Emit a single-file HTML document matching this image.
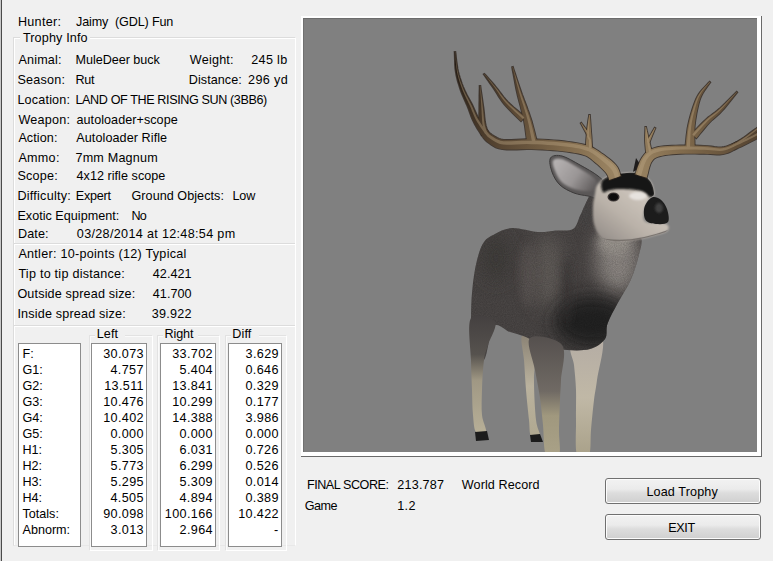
<!DOCTYPE html>
<html><head><meta charset="utf-8"><style>
html,body{margin:0;padding:0;}
body{width:773px;height:561px;overflow:hidden;background:#f0f0f0;position:relative;font-family:"Liberation Sans", sans-serif;color:#000;}
.t{position:absolute;white-space:nowrap;}
.a{position:absolute;box-sizing:border-box;}
.box{position:absolute;box-sizing:border-box;background:#fff;border:1px solid #8c8c8c;}
.btn{position:absolute;box-sizing:border-box;border:1px solid #707070;border-radius:3px;
 background:linear-gradient(#f2f2f2 0%,#ebebeb 42%,#dddddd 58%,#cfcfcf 100%);box-shadow:inset 0 0 0 1px #fcfcfc;}
</style></head><body>
<div class="a" style="left:0;top:0;width:1px;height:561px;background:#c8c8c8"></div>
<div class="a" style="left:1px;top:0;width:1px;height:561px;background:#4a4a4a"></div>
<div class="a" style="left:13px;top:37px;width:283px;height:509px;border:1px solid #dcdcdc;border-right-color:#fff;border-bottom-color:#e8e8e8;box-shadow:inset 1px 1px 0 #fff;"></div>
<div class="a" style="left:20px;top:32px;width:70px;height:10px;background:#f0f0f0"></div>
<div class="a" style="left:14px;top:243px;width:281px;height:1px;background:#dcdcdc"></div>
<div class="a" style="left:14px;top:244px;width:281px;height:1px;background:#fff"></div>
<div class="a" style="left:14px;top:325px;width:281px;height:1px;background:#dcdcdc"></div>
<div class="a" style="left:14px;top:326px;width:281px;height:1px;background:#fff"></div>
<div class="a" style="left:89px;top:335px;width:64px;height:216px;border:1px solid #e2e2e2;border-right-color:#fff;border-bottom-color:#fff;box-shadow:inset 1px 1px 0 #fafafa;"></div>
<div class="a" style="left:157px;top:335px;width:63px;height:216px;border:1px solid #e2e2e2;border-right-color:#fff;border-bottom-color:#fff;box-shadow:inset 1px 1px 0 #fafafa;"></div>
<div class="a" style="left:225px;top:335px;width:62px;height:216px;border:1px solid #e2e2e2;border-right-color:#fff;border-bottom-color:#fff;box-shadow:inset 1px 1px 0 #fafafa;"></div>
<div class="a" style="left:95px;top:330px;width:30px;height:10px;background:#f0f0f0"></div>
<div class="a" style="left:163px;top:330px;width:35px;height:10px;background:#f0f0f0"></div>
<div class="a" style="left:231px;top:330px;width:28px;height:10px;background:#f0f0f0"></div>
<div class="box" style="left:18px;top:343px;width:63px;height:204px"></div>
<div class="box" style="left:91px;top:343px;width:56px;height:204px"></div>
<div class="box" style="left:160px;top:343px;width:56px;height:204px"></div>
<div class="box" style="left:228px;top:343px;width:54px;height:204px"></div>
<div class="a" style="left:301px;top:16px;width:461px;height:441px;background:#fff;border-right:1px solid #6a6a6a;border-bottom:1px solid #6a6a6a;"></div>
<div class="a" style="left:303px;top:18px;width:454px;height:434px;background:#808080;border-top:1px solid #6c6c6c;border-left:1px solid #707070;"></div>
<svg class="a" style="left:0;top:0" width="773" height="561" viewBox="0 0 773 561">
<defs>
<clipPath id="vp"><rect x="303" y="19" width="454" height="433"/></clipPath>
<radialGradient id="ant" gradientUnits="userSpaceOnUse" cx="625" cy="165" r="200"><stop offset="0" stop-color="#a08a68"/><stop offset="0.3" stop-color="#806a4c"/><stop offset="0.62" stop-color="#5a4834"/><stop offset="1" stop-color="#221a14"/></radialGradient>
<linearGradient id="lg1" x1="0" y1="0" x2="0" y2="1"><stop offset="0" stop-color="#444040"/><stop offset="0.33" stop-color="#56524e"/><stop offset="0.55" stop-color="#a09884"/><stop offset="1" stop-color="#b8b098"/></linearGradient>
<linearGradient id="lg2" x1="0" y1="0" x2="0" y2="1"><stop offset="0" stop-color="#8a8274"/><stop offset="0.5" stop-color="#bab29e"/><stop offset="1" stop-color="#b0a890"/></linearGradient>
<linearGradient id="lg3" x1="0" y1="0" x2="0" y2="1"><stop offset="0" stop-color="#55504e"/><stop offset="0.45" stop-color="#706a64"/><stop offset="0.65" stop-color="#a0987e"/><stop offset="1" stop-color="#aaa288"/></linearGradient>
<linearGradient id="lg4" x1="0" y1="0" x2="0" y2="1"><stop offset="0" stop-color="#b4aca4"/><stop offset="0.5" stop-color="#c0b8a6"/><stop offset="1" stop-color="#a8a088"/></linearGradient>
<linearGradient id="faceg" gradientUnits="userSpaceOnUse" x1="640" y1="188" x2="600" y2="240"><stop offset="0" stop-color="#d0c8bf"/><stop offset="0.5" stop-color="#bab2a9"/><stop offset="0.85" stop-color="#a09993"/><stop offset="1" stop-color="#918b86"/></linearGradient>
<filter id="bl" x="-150%" y="-150%" width="400%" height="400%"><feGaussianBlur stdDeviation="9"/></filter>
<linearGradient id="earg" gradientUnits="userSpaceOnUse" x1="556" y1="162" x2="596" y2="190"><stop offset="0" stop-color="#b4b0b0"/><stop offset="0.5" stop-color="#9a9696"/><stop offset="1" stop-color="#5a5656"/></linearGradient>
<filter id="bl3" x="-20%" y="-20%" width="140%" height="140%"><feGaussianBlur stdDeviation="0.6"/></filter>
<filter id="noise" x="0" y="0" width="100%" height="100%"><feTurbulence type="fractalNoise" baseFrequency="0.9" numOctaves="2" seed="3"/><feColorMatrix type="matrix" values="0 0 0 0 0  0 0 0 0 0  0 0 0 0 0  0 0 0 -1.4 1.1"/></filter>
<filter id="bl4" x="-300%" y="-50%" width="700%" height="200%"><feGaussianBlur stdDeviation="4"/></filter>
<filter id="bl5" x="-20%" y="-20%" width="140%" height="140%"><feGaussianBlur stdDeviation="1.3"/></filter>
<filter id="bl2" x="-50%" y="-50%" width="200%" height="200%"><feGaussianBlur stdDeviation="1.2"/></filter>
<clipPath id="bodyc"><path d="M604.0,182.0 C602.7,178.2 595.2,188.2 592.0,192.0 C588.8,195.8 587.0,201.0 585.0,205.0 C583.0,209.0 582.0,212.0 580.0,216.0 C578.0,220.0 577.0,226.6 573.0,229.0 C569.0,231.4 561.8,230.0 556.0,230.5 C550.2,231.0 545.3,232.4 538.0,232.0 C530.7,231.6 519.2,227.7 512.0,228.0 C504.8,228.3 499.8,231.4 495.0,234.0 C490.2,236.6 486.2,238.1 483.0,243.5 C479.8,248.9 477.4,257.6 475.5,266.7 C473.6,275.8 472.4,287.2 471.6,297.8 C470.9,308.4 471.0,321.3 471.0,330.0 C471.0,338.7 469.4,345.0 471.6,350.0 C473.8,355.0 480.3,363.9 484.0,360.0 C487.7,356.1 489.3,331.0 493.6,326.3 C497.9,321.6 504.8,330.3 510.0,332.0 C515.2,333.7 518.9,334.3 524.7,336.6 C530.5,338.9 538.0,343.8 545.0,346.0 C552.0,348.2 559.5,349.5 567.0,350.0 C574.5,350.5 583.7,350.8 590.0,349.0 C596.3,347.2 602.1,343.2 605.0,339.0 C607.9,334.8 605.4,329.7 607.5,323.7 C609.6,317.7 613.9,310.3 617.8,303.0 C621.7,295.7 627.3,287.5 630.8,279.7 C634.2,271.9 636.8,263.3 638.5,256.4 C640.2,249.5 642.9,241.9 641.0,238.3 C639.1,234.7 631.8,235.6 627.0,235.0 C622.2,234.4 616.5,238.3 612.0,235.0 C607.5,231.7 601.3,223.8 600.0,215.0 C598.7,206.2 605.3,185.8 604.0,182.0Z"/></clipPath>
<clipPath id="facec"><path d="M598.0,184.0 C600.8,180.8 605.3,176.8 612.0,175.0 C618.7,173.2 631.7,172.0 638.0,173.0 C644.3,174.0 647.3,177.5 650.0,181.0 C652.7,184.5 654.2,191.0 654.0,194.0 C653.8,197.0 650.7,196.0 649.0,199.0 C647.3,202.0 644.5,208.2 644.0,212.0 C643.5,215.8 642.3,220.0 646.0,222.0 C649.7,224.0 662.5,222.5 666.0,224.0 C669.5,225.5 669.3,229.0 667.0,231.0 C664.7,233.0 657.5,234.5 652.0,236.0 C646.5,237.5 640.3,239.2 634.0,240.0 C627.7,240.8 619.5,241.5 614.0,241.0 C608.5,240.5 604.3,239.8 601.0,237.0 C597.7,234.2 595.3,229.2 594.0,224.0 C592.7,218.8 592.8,211.0 593.0,206.0 C593.2,201.0 594.2,197.7 595.0,194.0 C595.8,190.3 595.2,187.2 598.0,184.0Z"/></clipPath>
</defs>
<g clip-path="url(#vp)">
<path d="M522.0,336.0 C524.0,332.7 534.0,332.7 536.0,340.0 C538.0,347.3 534.0,366.7 534.0,380.0 C534.0,393.3 535.0,410.7 536.0,420.0 C537.0,429.3 540.8,433.3 540.0,436.0 C539.2,438.7 532.8,438.7 531.0,436.0 C529.2,433.3 529.8,427.7 529.0,420.0 C528.2,412.3 526.8,400.0 526.0,390.0 C525.2,380.0 524.7,369.0 524.0,360.0 C523.3,351.0 520.0,339.3 522.0,336.0Z" fill="url(#lg2)"/>
<path d="M572.0,345.0 C576.7,340.5 597.8,332.2 602.0,338.0 C606.2,343.8 598.3,369.7 597.0,380.0 C595.7,390.3 595.0,391.7 594.0,400.0 C593.0,408.3 591.8,420.8 591.0,430.0 C590.2,439.2 591.3,450.8 589.0,455.0 C586.7,459.2 579.2,460.8 577.0,455.0 C574.8,449.2 576.2,430.8 576.0,420.0 C575.8,409.2 576.3,399.2 576.0,390.0 C575.7,380.8 574.7,372.5 574.0,365.0 C573.3,357.5 567.3,349.5 572.0,345.0Z" fill="url(#lg4)"/>
<path d="M604.0,182.0 C602.7,178.2 595.2,188.2 592.0,192.0 C588.8,195.8 587.0,201.0 585.0,205.0 C583.0,209.0 582.0,212.0 580.0,216.0 C578.0,220.0 577.0,226.6 573.0,229.0 C569.0,231.4 561.8,230.0 556.0,230.5 C550.2,231.0 545.3,232.4 538.0,232.0 C530.7,231.6 519.2,227.7 512.0,228.0 C504.8,228.3 499.8,231.4 495.0,234.0 C490.2,236.6 486.2,238.1 483.0,243.5 C479.8,248.9 477.4,257.6 475.5,266.7 C473.6,275.8 472.4,287.2 471.6,297.8 C470.9,308.4 471.0,321.3 471.0,330.0 C471.0,338.7 469.4,345.0 471.6,350.0 C473.8,355.0 480.3,363.9 484.0,360.0 C487.7,356.1 489.3,331.0 493.6,326.3 C497.9,321.6 504.8,330.3 510.0,332.0 C515.2,333.7 518.9,334.3 524.7,336.6 C530.5,338.9 538.0,343.8 545.0,346.0 C552.0,348.2 559.5,349.5 567.0,350.0 C574.5,350.5 583.7,350.8 590.0,349.0 C596.3,347.2 602.1,343.2 605.0,339.0 C607.9,334.8 605.4,329.7 607.5,323.7 C609.6,317.7 613.9,310.3 617.8,303.0 C621.7,295.7 627.3,287.5 630.8,279.7 C634.2,271.9 636.8,263.3 638.5,256.4 C640.2,249.5 642.9,241.9 641.0,238.3 C639.1,234.7 631.8,235.6 627.0,235.0 C622.2,234.4 616.5,238.3 612.0,235.0 C607.5,231.7 601.3,223.8 600.0,215.0 C598.7,206.2 605.3,185.8 604.0,182.0Z" fill="#4a4645"/>
<g clip-path="url(#bodyc)">
<ellipse cx="618" cy="258" rx="22" ry="36" fill="#8c8682" filter="url(#bl)"/>
<ellipse cx="614" cy="242" rx="16" ry="12" fill="#9a948e" filter="url(#bl4)"/>
<ellipse cx="586" cy="212" rx="6" ry="16" fill="#4a4646" filter="url(#bl4)"/>
<ellipse cx="548" cy="272" rx="16" ry="38" fill="#605b58" filter="url(#bl)"/>
<ellipse cx="592" cy="322" rx="38" ry="26" fill="#242020" filter="url(#bl)"/>
<ellipse cx="496" cy="258" rx="14" ry="24" fill="#403c3b" filter="url(#bl)"/>
<ellipse cx="567" cy="290" rx="4" ry="34" fill="#363232" filter="url(#bl4)" opacity="0.8"/>
<ellipse cx="528" cy="275" rx="8" ry="32" fill="#5e5956" filter="url(#bl4)" opacity="0.7"/>
<rect x="460" y="180" width="200" height="190" fill="#000" filter="url(#noise)" opacity="0.18"/>
</g>
<path d="M471.0,318.0 C475.0,311.7 492.2,317.5 495.0,322.0 C497.8,326.5 489.8,338.7 488.0,345.0 C486.2,351.3 485.0,352.5 484.0,360.0 C483.0,367.5 482.3,380.8 482.0,390.0 C481.7,399.2 481.3,408.0 482.0,415.0 C482.7,422.0 487.0,429.2 486.0,432.0 C485.0,434.8 478.2,434.8 476.0,432.0 C473.8,429.2 473.7,422.0 473.0,415.0 C472.3,408.0 472.3,399.2 472.0,390.0 C471.7,380.8 471.2,372.0 471.0,360.0 C470.8,348.0 467.0,324.3 471.0,318.0Z" fill="url(#lg1)"/>
<path d="M530.0,338.0 C534.5,333.8 556.8,338.0 562.0,345.0 C567.2,352.0 561.3,370.8 561.0,380.0 C560.7,389.2 560.3,391.7 560.0,400.0 C559.7,408.3 559.2,420.8 559.0,430.0 C558.8,439.2 561.2,450.8 559.0,455.0 C556.8,459.2 548.7,460.0 546.0,455.0 C543.3,450.0 544.0,434.5 543.0,425.0 C542.0,415.5 541.3,407.2 540.0,398.0 C538.7,388.8 536.7,380.0 535.0,370.0 C533.3,360.0 525.5,342.2 530.0,338.0Z" fill="url(#lg3)"/>
<path d="M475,432 L487,431 L489,440 L476,441Z" fill="#1c1c1c"/>
<path d="M530,435 L540,434 L543,442 L531,442Z" fill="#1c1c1c"/>
<path d="M633,172 L636,158 L642,167Z" fill="#1e1c1c"/>
<path d="M550.5,158.0 C552.2,155.3 557.1,154.8 562.0,156.0 C566.9,157.2 574.0,161.7 580.0,165.0 C586.0,168.3 593.7,172.5 598.0,176.0 C602.3,179.5 605.7,182.3 606.0,186.0 C606.3,189.7 603.0,196.3 600.0,198.0 C597.0,199.7 592.3,196.8 588.0,196.0 C583.7,195.2 578.7,194.8 574.0,193.0 C569.3,191.2 563.7,188.5 560.0,185.0 C556.3,181.5 553.6,176.5 552.0,172.0 C550.4,167.5 548.8,160.7 550.5,158.0Z" fill="#5a5757" stroke="#3c3a3a" stroke-width="1"/>
<path d="M553.0,160.5 C554.2,158.5 557.8,157.8 562.0,159.0 C566.2,160.2 572.7,164.3 578.0,167.5 C583.3,170.7 590.7,174.6 594.0,178.0 C597.3,181.4 599.0,185.8 598.0,188.0 C597.0,190.2 592.0,190.8 588.0,191.0 C584.0,191.2 578.3,190.4 574.0,189.0 C569.7,187.6 565.2,185.5 562.0,182.5 C558.8,179.5 556.5,174.7 555.0,171.0 C553.5,167.3 551.8,162.5 553.0,160.5Z" fill="url(#earg)" filter="url(#bl2)"/>
<path d="M598.0,184.0 C600.8,180.8 605.3,176.8 612.0,175.0 C618.7,173.2 631.7,172.0 638.0,173.0 C644.3,174.0 647.3,177.5 650.0,181.0 C652.7,184.5 654.2,191.0 654.0,194.0 C653.8,197.0 650.7,196.0 649.0,199.0 C647.3,202.0 644.5,208.2 644.0,212.0 C643.5,215.8 642.3,220.0 646.0,222.0 C649.7,224.0 662.5,222.5 666.0,224.0 C669.5,225.5 669.3,229.0 667.0,231.0 C664.7,233.0 657.5,234.5 652.0,236.0 C646.5,237.5 640.3,239.2 634.0,240.0 C627.7,240.8 619.5,241.5 614.0,241.0 C608.5,240.5 604.3,239.8 601.0,237.0 C597.7,234.2 595.3,229.2 594.0,224.0 C592.7,218.8 592.8,211.0 593.0,206.0 C593.2,201.0 594.2,197.7 595.0,194.0 C595.8,190.3 595.2,187.2 598.0,184.0Z" fill="url(#faceg)" filter="url(#bl5)"/>
<g clip-path="url(#facec)">
<path d="M602.0,181.0 C603.8,178.0 610.2,175.6 614.0,174.0 C617.8,172.4 620.7,171.7 625.0,171.5 C629.3,171.3 635.7,171.4 640.0,173.0 C644.3,174.6 648.5,177.5 651.0,181.0 C653.5,184.5 655.2,191.3 655.0,194.0 C654.8,196.7 652.3,197.5 650.0,197.0 C647.7,196.5 645.7,192.3 641.0,191.0 C636.3,189.7 627.2,189.2 622.0,189.0 C616.8,188.8 613.2,189.5 610.0,190.0 C606.8,190.5 604.3,193.5 603.0,192.0 C601.7,190.5 600.2,184.0 602.0,181.0Z" fill="#151515" filter="url(#bl2)"/>
<ellipse cx="638" cy="196" rx="9" ry="4" fill="#e6e2de" filter="url(#bl2)"/>
<path d="M594,236 Q625,246 668,230 L668,245 L590,245Z" fill="#6e6864" filter="url(#bl3)" opacity="0.8"/>
</g>
<path d="M652.0,197.4 C654.7,196.2 658.0,197.7 660.5,199.6 C663.0,201.5 665.8,205.3 667.0,209.0 C668.2,212.7 669.8,219.5 668.0,222.0 C666.2,224.5 659.7,224.3 656.0,224.0 C652.3,223.7 647.5,222.8 645.6,220.0 C643.7,217.2 643.4,210.8 644.5,207.0 C645.6,203.2 649.3,198.6 652.0,197.4Z" fill="#1c1c1c"/>
<ellipse cx="659" cy="208" rx="4" ry="5" fill="#404040" filter="url(#bl2)"/>
<ellipse cx="613.5" cy="197" rx="6" ry="4.6" fill="#3a3634" filter="url(#bl3)"/><ellipse cx="613.5" cy="197" rx="4.6" ry="3.6" fill="#0c0c0c"/>
<g fill="none" stroke="#30261e" stroke-width="1.8" stroke-opacity="0.8"><path d="M620.7,176.0 L620.4,175.2 L620.1,174.0 L619.6,172.2 L618.8,169.9 L617.6,167.5 L615.8,165.1 L613.8,162.9 L611.4,160.8 L608.9,158.7 L606.2,156.7 L603.7,154.8 L601.3,153.2 L599.4,151.8 L597.5,150.5 L595.5,149.2 L593.2,147.9 L590.6,146.7 L587.6,145.6 L584.1,144.7 L580.5,143.8 L576.5,143.1 L572.4,142.4 L568.1,141.8 L563.6,141.2 L558.7,140.7 L553.6,140.3 L548.2,139.9 L542.7,139.6 L537.3,139.4 L532.1,139.2 L526.8,139.2 L521.4,139.4 L516.1,139.7 L511.3,139.9 L507.0,140.0 L503.6,139.8 L501.0,139.4 L499.1,138.8 L497.6,138.2 L496.2,137.4 L494.7,136.5 L493.1,135.5 L491.8,134.7 L491.0,134.1 L490.3,133.6 L489.5,132.9 L488.6,131.9 L487.5,130.5 L486.1,128.9 L484.6,127.0 L483.0,125.0 L481.5,122.9 L480.0,120.7 L478.6,118.6 L477.5,116.5 L476.5,114.4 L475.5,112.2 L474.5,109.9 L473.5,107.5 L472.3,105.0 L471.0,102.4 L469.6,99.9 L468.1,97.3 L466.7,94.7 L465.4,92.0 L464.2,89.3 L463.0,86.6 L461.9,83.7 L460.9,80.8 L459.9,77.8 L459.0,74.8 L458.2,71.8 L457.5,68.4 L457.0,64.6 L456.4,60.8 L456.0,57.2 L455.7,54.2 L455.4,52.0 L454.6,52.0 L454.7,54.2 L454.8,57.3 L454.9,60.9 L455.0,64.8 L455.3,68.7 L455.8,72.2 L456.4,75.5 L457.1,78.6 L457.9,81.7 L458.9,84.7 L459.8,87.7 L460.8,90.7 L461.9,93.6 L463.1,96.4 L464.3,99.2 L465.5,101.9 L466.7,104.5 L467.7,107.0 L468.7,109.5 L469.5,111.8 L470.4,114.2 L471.3,116.6 L472.2,119.0 L473.4,121.4 L474.6,123.9 L476.0,126.3 L477.4,128.8 L478.9,131.1 L480.3,133.2 L481.5,135.1 L482.6,136.6 L483.5,137.9 L484.5,139.1 L485.6,140.3 L486.9,141.5 L488.3,142.5 L489.7,143.6 L491.3,144.8 L493.3,146.1 L495.7,147.4 L498.8,148.5 L502.4,149.2 L506.7,149.6 L511.5,149.6 L516.5,149.5 L521.7,149.3 L526.9,149.2 L531.9,149.2 L536.9,149.4 L542.2,149.6 L547.6,149.9 L552.8,150.3 L557.8,150.7 L562.4,151.2 L566.8,151.7 L570.9,152.3 L574.8,152.9 L578.4,153.6 L581.6,154.3 L584.4,155.2 L586.7,156.0 L588.3,156.9 L589.8,157.9 L591.2,159.0 L592.8,160.4 L594.7,162.0 L596.8,163.7 L598.9,165.6 L601.1,167.7 L603.2,169.7 L604.9,171.5 L606.2,172.9 L606.9,174.0 L607.5,175.1 L608.0,176.3 L608.5,177.5 L608.9,178.9 L609.3,180.0Z"/><path d="M536.9,141.0 L536.3,138.8 L535.5,135.7 L534.6,132.0 L533.6,128.1 L532.6,124.4 L531.7,121.1 L530.8,118.4 L530.0,116.0 L529.3,113.8 L528.5,111.6 L527.7,109.5 L526.9,107.1 L526.0,104.7 L525.1,102.3 L524.1,99.9 L523.2,97.3 L522.1,94.6 L521.0,91.4 L519.7,87.6 L518.2,83.0 L516.6,78.2 L515.1,73.6 L513.8,69.7 L512.9,66.9 L512.1,67.1 L512.6,70.0 L513.4,74.0 L514.3,78.8 L515.2,83.8 L516.1,88.5 L517.0,92.6 L517.7,95.9 L518.5,98.8 L519.2,101.5 L519.9,104.0 L520.5,106.4 L521.1,108.9 L521.7,111.3 L522.3,113.5 L522.8,115.7 L523.4,117.9 L523.9,120.2 L524.3,122.9 L524.9,126.0 L525.4,129.8 L525.9,133.7 L526.4,137.5 L526.8,140.7 L527.1,143.0Z"/><path d="M525.0,116.8 L523.0,115.1 L520.2,112.8 L516.9,110.0 L513.5,107.1 L510.3,104.2 L507.6,101.6 L505.4,99.2 L503.4,96.8 L501.6,94.4 L499.8,92.0 L498.0,89.5 L496.1,87.2 L494.0,84.7 L491.8,82.1 L489.5,79.5 L487.4,77.2 L485.6,75.2 L484.3,73.8 L483.7,74.2 L484.8,75.8 L486.3,78.0 L488.1,80.6 L490.1,83.4 L492.1,86.2 L493.9,88.8 L495.5,91.3 L497.1,93.8 L498.7,96.4 L500.4,99.0 L502.3,101.7 L504.4,104.4 L507.1,107.4 L510.2,110.6 L513.4,113.9 L516.5,116.9 L519.1,119.4 L521.0,121.2Z"/><path d="M488.4,133.0 L488.0,132.0 L487.5,130.6 L486.9,129.1 L486.4,127.4 L485.8,125.5 L485.4,123.6 L485.0,121.5 L484.7,119.2 L484.4,116.6 L484.2,113.9 L483.9,111.0 L483.5,107.9 L483.0,104.3 L482.4,100.2 L481.8,95.9 L481.2,91.9 L480.7,88.4 L480.4,86.0 L479.6,86.0 L479.6,88.5 L479.5,92.0 L479.4,96.1 L479.4,100.4 L479.3,104.5 L479.3,108.1 L479.3,111.2 L479.2,114.1 L479.2,116.9 L479.2,119.5 L479.3,122.0 L479.4,124.4 L479.7,126.8 L480.1,128.9 L480.6,130.9 L481.0,132.6 L481.4,134.0 L481.6,135.0Z"/><path d="M592.2,148.0 L592.1,146.0 L591.9,143.2 L591.7,139.9 L591.5,136.4 L591.2,133.0 L591.0,130.0 L590.8,127.2 L590.6,124.3 L590.4,121.4 L590.2,118.8 L590.0,116.6 L589.9,115.0 L589.1,115.0 L588.9,116.6 L588.5,118.7 L588.1,121.3 L587.7,124.2 L587.3,127.1 L587.0,130.0 L586.7,133.0 L586.5,136.4 L586.2,139.9 L586.0,143.2 L585.9,146.0 L585.8,148.0Z"/><path d="M589.1,133.3 L588.2,132.0 L586.8,130.2 L585.2,128.1 L583.6,125.9 L582.2,124.1 L581.3,122.8 L580.7,123.2 L581.5,124.5 L582.6,126.6 L583.8,128.9 L585.1,131.3 L586.2,133.3 L586.9,134.7Z"/><path d="M646.7,177.8 L647.2,175.8 L647.9,173.2 L648.6,170.1 L649.4,167.1 L650.3,164.5 L651.1,162.6 L652.0,161.2 L652.8,160.1 L653.5,159.2 L654.4,158.5 L655.7,157.8 L657.4,157.0 L659.6,156.3 L662.3,155.7 L665.3,155.1 L668.7,154.7 L672.4,154.3 L676.2,154.0 L680.4,153.8 L685.1,153.7 L690.1,153.7 L695.0,153.7 L699.7,153.8 L703.9,153.8 L707.4,153.9 L710.6,154.1 L713.7,154.3 L716.8,154.5 L719.8,154.5 L723.0,154.2 L726.0,153.5 L728.7,152.6 L731.2,151.5 L733.5,150.3 L735.9,149.1 L738.5,147.8 L741.6,146.4 L745.0,144.8 L748.5,143.0 L751.8,141.3 L754.8,139.7 L757.3,138.4 L759.2,137.3 L760.6,136.4 L761.7,135.5 L762.5,134.9 L763.1,134.4 L763.5,134.0 L760.5,130.0 L759.9,130.4 L759.3,130.8 L758.6,131.3 L757.7,131.9 L756.4,132.7 L754.7,133.6 L752.3,134.8 L749.3,136.3 L745.9,137.9 L742.5,139.5 L739.1,141.1 L736.1,142.4 L733.4,143.5 L730.9,144.6 L728.6,145.5 L726.5,146.3 L724.3,146.9 L722.0,147.2 L719.6,147.3 L717.2,147.2 L714.4,146.9 L711.4,146.4 L707.9,146.1 L704.1,145.8 L699.9,145.7 L695.1,145.5 L690.1,145.5 L685.1,145.4 L680.2,145.4 L675.8,145.6 L671.8,145.7 L667.9,145.9 L664.2,146.2 L660.7,146.6 L657.4,147.2 L654.4,148.0 L651.7,149.0 L649.3,150.1 L647.2,151.6 L645.3,153.3 L643.7,155.2 L642.1,157.4 L640.5,160.2 L639.1,163.5 L637.8,166.8 L636.7,169.9 L635.9,172.5 L635.3,174.2Z"/><path d="M694.7,149.2 L694.7,146.9 L694.6,143.7 L694.5,140.1 L694.4,136.1 L694.4,132.3 L694.5,128.9 L694.7,125.8 L695.1,122.6 L695.5,119.5 L696.0,116.5 L696.5,113.5 L697.1,110.6 L697.7,107.9 L698.3,105.3 L698.9,102.8 L699.6,100.4 L700.4,98.1 L701.4,95.8 L702.7,93.4 L704.3,90.8 L706.1,88.2 L707.8,85.8 L709.3,83.7 L710.3,82.3 L709.7,81.7 L708.4,83.0 L706.7,84.8 L704.6,87.0 L702.4,89.3 L700.3,91.8 L698.6,94.2 L697.2,96.6 L696.0,99.0 L695.0,101.5 L694.1,104.0 L693.2,106.6 L692.3,109.4 L691.4,112.2 L690.5,115.2 L689.7,118.3 L688.9,121.5 L688.2,124.8 L687.5,128.1 L687.0,131.8 L686.5,135.7 L686.1,139.8 L685.7,143.5 L685.5,146.6 L685.3,148.8Z"/><path d="M696.4,138.2 L697.9,136.4 L699.8,134.0 L702.2,131.1 L704.7,128.1 L707.1,125.2 L709.4,122.7 L711.4,120.7 L713.3,119.0 L715.3,117.3 L717.3,115.6 L719.5,113.6 L721.8,111.2 L724.4,108.3 L727.4,104.7 L730.4,101.0 L733.2,97.4 L735.6,94.4 L737.3,92.3 L736.7,91.7 L734.8,93.7 L732.0,96.4 L728.8,99.6 L725.5,103.0 L722.2,106.1 L719.4,108.8 L717.0,110.8 L714.8,112.5 L712.7,114.0 L710.6,115.6 L708.3,117.3 L706.0,119.3 L703.5,121.7 L700.7,124.4 L697.9,127.3 L695.3,130.0 L693.1,132.2 L691.6,133.8Z"/><path d="M652.0,151.5 L651.6,150.2 L651.2,148.4 L650.6,146.4 L650.1,144.1 L649.5,141.9 L649.0,139.7 L648.5,137.5 L647.9,135.1 L647.4,132.6 L646.8,130.3 L646.4,128.4 L646.1,127.0 L645.3,127.0 L645.3,128.5 L645.2,130.5 L645.1,132.9 L645.0,135.4 L645.0,137.9 L645.0,140.3 L645.1,142.5 L645.3,144.9 L645.5,147.3 L645.7,149.4 L645.9,151.2 L646.0,152.5Z"/><path d="M649.3,142.7 L650.1,140.9 L651.1,138.4 L652.3,135.4 L653.6,132.5 L654.6,129.9 L655.4,128.2 L654.6,127.8 L653.7,129.4 L652.3,131.8 L650.7,134.6 L649.0,137.3 L647.6,139.7 L646.7,141.3Z"/><path d="M734.4,149.1 L735.6,148.2 L737.2,147.1 L739.2,145.7 L741.4,144.2 L743.8,142.4 L746.2,140.6 L748.9,138.5 L752.0,136.0 L755.3,133.4 L758.4,130.8 L761.0,128.7 L762.9,127.2 L761.1,124.8 L759.1,126.2 L756.4,128.3 L753.2,130.6 L749.8,133.1 L746.6,135.4 L743.8,137.4 L741.4,139.0 L739.0,140.5 L736.7,141.9 L734.6,143.1 L732.9,144.1 L731.6,144.9Z"/></g>
<g fill="url(#ant)"><path d="M620.7,176.0 L620.4,175.2 L620.1,174.0 L619.6,172.2 L618.8,169.9 L617.6,167.5 L615.8,165.1 L613.8,162.9 L611.4,160.8 L608.9,158.7 L606.2,156.7 L603.7,154.8 L601.3,153.2 L599.4,151.8 L597.5,150.5 L595.5,149.2 L593.2,147.9 L590.6,146.7 L587.6,145.6 L584.1,144.7 L580.5,143.8 L576.5,143.1 L572.4,142.4 L568.1,141.8 L563.6,141.2 L558.7,140.7 L553.6,140.3 L548.2,139.9 L542.7,139.6 L537.3,139.4 L532.1,139.2 L526.8,139.2 L521.4,139.4 L516.1,139.7 L511.3,139.9 L507.0,140.0 L503.6,139.8 L501.0,139.4 L499.1,138.8 L497.6,138.2 L496.2,137.4 L494.7,136.5 L493.1,135.5 L491.8,134.7 L491.0,134.1 L490.3,133.6 L489.5,132.9 L488.6,131.9 L487.5,130.5 L486.1,128.9 L484.6,127.0 L483.0,125.0 L481.5,122.9 L480.0,120.7 L478.6,118.6 L477.5,116.5 L476.5,114.4 L475.5,112.2 L474.5,109.9 L473.5,107.5 L472.3,105.0 L471.0,102.4 L469.6,99.9 L468.1,97.3 L466.7,94.7 L465.4,92.0 L464.2,89.3 L463.0,86.6 L461.9,83.7 L460.9,80.8 L459.9,77.8 L459.0,74.8 L458.2,71.8 L457.5,68.4 L457.0,64.6 L456.4,60.8 L456.0,57.2 L455.7,54.2 L455.4,52.0 L454.6,52.0 L454.7,54.2 L454.8,57.3 L454.9,60.9 L455.0,64.8 L455.3,68.7 L455.8,72.2 L456.4,75.5 L457.1,78.6 L457.9,81.7 L458.9,84.7 L459.8,87.7 L460.8,90.7 L461.9,93.6 L463.1,96.4 L464.3,99.2 L465.5,101.9 L466.7,104.5 L467.7,107.0 L468.7,109.5 L469.5,111.8 L470.4,114.2 L471.3,116.6 L472.2,119.0 L473.4,121.4 L474.6,123.9 L476.0,126.3 L477.4,128.8 L478.9,131.1 L480.3,133.2 L481.5,135.1 L482.6,136.6 L483.5,137.9 L484.5,139.1 L485.6,140.3 L486.9,141.5 L488.3,142.5 L489.7,143.6 L491.3,144.8 L493.3,146.1 L495.7,147.4 L498.8,148.5 L502.4,149.2 L506.7,149.6 L511.5,149.6 L516.5,149.5 L521.7,149.3 L526.9,149.2 L531.9,149.2 L536.9,149.4 L542.2,149.6 L547.6,149.9 L552.8,150.3 L557.8,150.7 L562.4,151.2 L566.8,151.7 L570.9,152.3 L574.8,152.9 L578.4,153.6 L581.6,154.3 L584.4,155.2 L586.7,156.0 L588.3,156.9 L589.8,157.9 L591.2,159.0 L592.8,160.4 L594.7,162.0 L596.8,163.7 L598.9,165.6 L601.1,167.7 L603.2,169.7 L604.9,171.5 L606.2,172.9 L606.9,174.0 L607.5,175.1 L608.0,176.3 L608.5,177.5 L608.9,178.9 L609.3,180.0Z"/><path d="M536.9,141.0 L536.3,138.8 L535.5,135.7 L534.6,132.0 L533.6,128.1 L532.6,124.4 L531.7,121.1 L530.8,118.4 L530.0,116.0 L529.3,113.8 L528.5,111.6 L527.7,109.5 L526.9,107.1 L526.0,104.7 L525.1,102.3 L524.1,99.9 L523.2,97.3 L522.1,94.6 L521.0,91.4 L519.7,87.6 L518.2,83.0 L516.6,78.2 L515.1,73.6 L513.8,69.7 L512.9,66.9 L512.1,67.1 L512.6,70.0 L513.4,74.0 L514.3,78.8 L515.2,83.8 L516.1,88.5 L517.0,92.6 L517.7,95.9 L518.5,98.8 L519.2,101.5 L519.9,104.0 L520.5,106.4 L521.1,108.9 L521.7,111.3 L522.3,113.5 L522.8,115.7 L523.4,117.9 L523.9,120.2 L524.3,122.9 L524.9,126.0 L525.4,129.8 L525.9,133.7 L526.4,137.5 L526.8,140.7 L527.1,143.0Z"/><path d="M525.0,116.8 L523.0,115.1 L520.2,112.8 L516.9,110.0 L513.5,107.1 L510.3,104.2 L507.6,101.6 L505.4,99.2 L503.4,96.8 L501.6,94.4 L499.8,92.0 L498.0,89.5 L496.1,87.2 L494.0,84.7 L491.8,82.1 L489.5,79.5 L487.4,77.2 L485.6,75.2 L484.3,73.8 L483.7,74.2 L484.8,75.8 L486.3,78.0 L488.1,80.6 L490.1,83.4 L492.1,86.2 L493.9,88.8 L495.5,91.3 L497.1,93.8 L498.7,96.4 L500.4,99.0 L502.3,101.7 L504.4,104.4 L507.1,107.4 L510.2,110.6 L513.4,113.9 L516.5,116.9 L519.1,119.4 L521.0,121.2Z"/><path d="M488.4,133.0 L488.0,132.0 L487.5,130.6 L486.9,129.1 L486.4,127.4 L485.8,125.5 L485.4,123.6 L485.0,121.5 L484.7,119.2 L484.4,116.6 L484.2,113.9 L483.9,111.0 L483.5,107.9 L483.0,104.3 L482.4,100.2 L481.8,95.9 L481.2,91.9 L480.7,88.4 L480.4,86.0 L479.6,86.0 L479.6,88.5 L479.5,92.0 L479.4,96.1 L479.4,100.4 L479.3,104.5 L479.3,108.1 L479.3,111.2 L479.2,114.1 L479.2,116.9 L479.2,119.5 L479.3,122.0 L479.4,124.4 L479.7,126.8 L480.1,128.9 L480.6,130.9 L481.0,132.6 L481.4,134.0 L481.6,135.0Z"/><path d="M592.2,148.0 L592.1,146.0 L591.9,143.2 L591.7,139.9 L591.5,136.4 L591.2,133.0 L591.0,130.0 L590.8,127.2 L590.6,124.3 L590.4,121.4 L590.2,118.8 L590.0,116.6 L589.9,115.0 L589.1,115.0 L588.9,116.6 L588.5,118.7 L588.1,121.3 L587.7,124.2 L587.3,127.1 L587.0,130.0 L586.7,133.0 L586.5,136.4 L586.2,139.9 L586.0,143.2 L585.9,146.0 L585.8,148.0Z"/><path d="M589.1,133.3 L588.2,132.0 L586.8,130.2 L585.2,128.1 L583.6,125.9 L582.2,124.1 L581.3,122.8 L580.7,123.2 L581.5,124.5 L582.6,126.6 L583.8,128.9 L585.1,131.3 L586.2,133.3 L586.9,134.7Z"/><path d="M646.7,177.8 L647.2,175.8 L647.9,173.2 L648.6,170.1 L649.4,167.1 L650.3,164.5 L651.1,162.6 L652.0,161.2 L652.8,160.1 L653.5,159.2 L654.4,158.5 L655.7,157.8 L657.4,157.0 L659.6,156.3 L662.3,155.7 L665.3,155.1 L668.7,154.7 L672.4,154.3 L676.2,154.0 L680.4,153.8 L685.1,153.7 L690.1,153.7 L695.0,153.7 L699.7,153.8 L703.9,153.8 L707.4,153.9 L710.6,154.1 L713.7,154.3 L716.8,154.5 L719.8,154.5 L723.0,154.2 L726.0,153.5 L728.7,152.6 L731.2,151.5 L733.5,150.3 L735.9,149.1 L738.5,147.8 L741.6,146.4 L745.0,144.8 L748.5,143.0 L751.8,141.3 L754.8,139.7 L757.3,138.4 L759.2,137.3 L760.6,136.4 L761.7,135.5 L762.5,134.9 L763.1,134.4 L763.5,134.0 L760.5,130.0 L759.9,130.4 L759.3,130.8 L758.6,131.3 L757.7,131.9 L756.4,132.7 L754.7,133.6 L752.3,134.8 L749.3,136.3 L745.9,137.9 L742.5,139.5 L739.1,141.1 L736.1,142.4 L733.4,143.5 L730.9,144.6 L728.6,145.5 L726.5,146.3 L724.3,146.9 L722.0,147.2 L719.6,147.3 L717.2,147.2 L714.4,146.9 L711.4,146.4 L707.9,146.1 L704.1,145.8 L699.9,145.7 L695.1,145.5 L690.1,145.5 L685.1,145.4 L680.2,145.4 L675.8,145.6 L671.8,145.7 L667.9,145.9 L664.2,146.2 L660.7,146.6 L657.4,147.2 L654.4,148.0 L651.7,149.0 L649.3,150.1 L647.2,151.6 L645.3,153.3 L643.7,155.2 L642.1,157.4 L640.5,160.2 L639.1,163.5 L637.8,166.8 L636.7,169.9 L635.9,172.5 L635.3,174.2Z"/><path d="M694.7,149.2 L694.7,146.9 L694.6,143.7 L694.5,140.1 L694.4,136.1 L694.4,132.3 L694.5,128.9 L694.7,125.8 L695.1,122.6 L695.5,119.5 L696.0,116.5 L696.5,113.5 L697.1,110.6 L697.7,107.9 L698.3,105.3 L698.9,102.8 L699.6,100.4 L700.4,98.1 L701.4,95.8 L702.7,93.4 L704.3,90.8 L706.1,88.2 L707.8,85.8 L709.3,83.7 L710.3,82.3 L709.7,81.7 L708.4,83.0 L706.7,84.8 L704.6,87.0 L702.4,89.3 L700.3,91.8 L698.6,94.2 L697.2,96.6 L696.0,99.0 L695.0,101.5 L694.1,104.0 L693.2,106.6 L692.3,109.4 L691.4,112.2 L690.5,115.2 L689.7,118.3 L688.9,121.5 L688.2,124.8 L687.5,128.1 L687.0,131.8 L686.5,135.7 L686.1,139.8 L685.7,143.5 L685.5,146.6 L685.3,148.8Z"/><path d="M696.4,138.2 L697.9,136.4 L699.8,134.0 L702.2,131.1 L704.7,128.1 L707.1,125.2 L709.4,122.7 L711.4,120.7 L713.3,119.0 L715.3,117.3 L717.3,115.6 L719.5,113.6 L721.8,111.2 L724.4,108.3 L727.4,104.7 L730.4,101.0 L733.2,97.4 L735.6,94.4 L737.3,92.3 L736.7,91.7 L734.8,93.7 L732.0,96.4 L728.8,99.6 L725.5,103.0 L722.2,106.1 L719.4,108.8 L717.0,110.8 L714.8,112.5 L712.7,114.0 L710.6,115.6 L708.3,117.3 L706.0,119.3 L703.5,121.7 L700.7,124.4 L697.9,127.3 L695.3,130.0 L693.1,132.2 L691.6,133.8Z"/><path d="M652.0,151.5 L651.6,150.2 L651.2,148.4 L650.6,146.4 L650.1,144.1 L649.5,141.9 L649.0,139.7 L648.5,137.5 L647.9,135.1 L647.4,132.6 L646.8,130.3 L646.4,128.4 L646.1,127.0 L645.3,127.0 L645.3,128.5 L645.2,130.5 L645.1,132.9 L645.0,135.4 L645.0,137.9 L645.0,140.3 L645.1,142.5 L645.3,144.9 L645.5,147.3 L645.7,149.4 L645.9,151.2 L646.0,152.5Z"/><path d="M649.3,142.7 L650.1,140.9 L651.1,138.4 L652.3,135.4 L653.6,132.5 L654.6,129.9 L655.4,128.2 L654.6,127.8 L653.7,129.4 L652.3,131.8 L650.7,134.6 L649.0,137.3 L647.6,139.7 L646.7,141.3Z"/><path d="M734.4,149.1 L735.6,148.2 L737.2,147.1 L739.2,145.7 L741.4,144.2 L743.8,142.4 L746.2,140.6 L748.9,138.5 L752.0,136.0 L755.3,133.4 L758.4,130.8 L761.0,128.7 L762.9,127.2 L761.1,124.8 L759.1,126.2 L756.4,128.3 L753.2,130.6 L749.8,133.1 L746.6,135.4 L743.8,137.4 L741.4,139.0 L739.0,140.5 L736.7,141.9 L734.6,143.1 L732.9,144.1 L731.6,144.9Z"/></g>
<g fill="#bca684" opacity="0.4" filter="url(#bl3)"><path d="M619.0,176.6 L618.8,175.8 L618.5,174.5 L618.0,172.8 L617.2,170.7 L616.0,168.4 L614.4,166.2 L612.5,164.1 L610.2,162.0 L607.7,160.0 L605.2,158.0 L602.6,156.1 L600.3,154.5 L598.4,153.1 L596.6,151.7 L594.6,150.5 L592.5,149.2 L590.0,148.1 L587.1,147.0 L583.8,146.1 L580.2,145.2 L576.3,144.5 L572.2,143.8 L567.9,143.2 L563.4,142.7 L558.6,142.2 L553.5,141.7 L548.1,141.4 L542.7,141.1 L537.3,140.8 L532.1,140.7 L526.8,140.7 L521.4,140.8 L516.2,141.1 L511.3,141.3 L506.9,141.3 L503.4,141.2 L500.7,140.7 L498.6,140.1 L496.9,139.3 L495.4,138.5 L493.9,137.5 L492.4,136.5 L491.1,135.7 L490.2,135.0 L489.4,134.4 L488.6,133.6 L487.7,132.5 L486.6,131.2 L485.3,129.5 L483.8,127.6 L482.2,125.5 L480.7,123.3 L479.2,121.1 L477.9,119.0 L476.7,116.9 L475.7,114.7 L474.7,112.5 L473.8,110.2 L472.8,107.7 L471.6,105.3 L470.3,102.7 L469.0,100.2 L467.6,97.6 L466.2,94.9 L464.9,92.3 L463.7,89.5 L462.6,86.7 L461.5,83.8 L460.4,80.9 L459.5,77.9 L458.6,74.9 L457.9,71.8 L457.2,68.4 L456.7,64.7 L456.2,60.8 L455.8,57.2 L455.5,54.2 L455.3,52.0 L455.0,52.0 L455.2,54.2 L455.4,57.3 L455.7,60.9 L456.0,64.7 L456.5,68.6 L457.0,72.0 L457.7,75.1 L458.5,78.2 L459.4,81.3 L460.4,84.2 L461.4,87.1 L462.5,90.0 L463.7,92.8 L464.9,95.6 L466.2,98.3 L467.6,100.9 L468.8,103.5 L470.0,106.0 L471.1,108.5 L472.0,110.9 L473.0,113.2 L473.9,115.5 L474.9,117.8 L476.0,120.0 L477.3,122.3 L478.8,124.6 L480.3,126.9 L481.8,129.1 L483.2,131.1 L484.5,132.8 L485.6,134.2 L486.6,135.4 L487.4,136.4 L488.3,137.2 L489.4,138.1 L490.7,139.0 L492.2,140.0 L493.8,141.1 L495.5,142.1 L497.5,143.1 L499.9,143.9 L503.0,144.5 L506.9,144.7 L511.4,144.7 L516.3,144.5 L521.6,144.3 L526.9,144.1 L532.0,144.2 L537.1,144.3 L542.5,144.6 L547.9,144.9 L553.2,145.2 L558.3,145.7 L563.0,146.2 L567.4,146.7 L571.7,147.3 L575.7,147.9 L579.5,148.6 L582.9,149.5 L586.0,150.4 L588.7,151.3 L590.8,152.4 L592.7,153.5 L594.4,154.8 L596.1,156.1 L598.1,157.6 L600.3,159.3 L602.7,161.2 L605.1,163.2 L607.4,165.2 L609.4,167.2 L611.1,169.0 L612.3,170.7 L613.2,172.5 L613.9,174.2 L614.3,175.7 L614.7,177.0 L615.0,178.0Z"/><path d="M535.5,141.3 L534.9,139.1 L534.2,135.9 L533.3,132.2 L532.4,128.3 L531.4,124.6 L530.6,121.4 L529.8,118.7 L529.1,116.3 L528.3,114.1 L527.6,111.9 L526.8,109.7 L526.0,107.4 L525.2,104.9 L524.3,102.5 L523.4,100.1 L522.5,97.5 L521.5,94.7 L520.4,91.6 L519.2,87.7 L517.8,83.1 L516.3,78.3 L514.8,73.7 L513.6,69.7 L512.8,66.9 L512.5,67.0 L513.2,69.8 L514.3,73.8 L515.5,78.5 L516.7,83.4 L518.0,88.1 L519.0,92.0 L520.0,95.2 L520.8,98.1 L521.7,100.7 L522.5,103.2 L523.3,105.6 L524.0,108.0 L524.8,110.4 L525.4,112.6 L526.1,114.8 L526.7,117.0 L527.4,119.4 L528.0,122.0 L528.8,125.2 L529.5,129.0 L530.3,132.9 L531.0,136.6 L531.6,139.8 L532.1,142.0Z"/><path d="M524.4,117.4 L522.5,115.7 L519.7,113.4 L516.4,110.6 L513.0,107.6 L509.8,104.7 L507.1,102.0 L504.9,99.5 L503.0,97.1 L501.1,94.7 L499.4,92.2 L497.6,89.8 L495.8,87.4 L493.7,84.9 L491.5,82.3 L489.3,79.7 L487.2,77.3 L485.5,75.3 L484.2,73.8 L484.0,74.0 L485.2,75.5 L486.9,77.6 L488.8,80.1 L490.9,82.7 L493.1,85.4 L495.0,88.0 L496.8,90.4 L498.5,92.9 L500.1,95.4 L501.9,97.9 L503.8,100.4 L506.0,103.0 L508.7,105.8 L511.9,108.8 L515.2,111.9 L518.4,114.8 L521.1,117.2 L523.0,119.0Z"/><path d="M487.4,133.3 L487.0,132.2 L486.6,130.9 L486.0,129.3 L485.5,127.6 L484.9,125.7 L484.5,123.7 L484.2,121.5 L483.9,119.2 L483.7,116.6 L483.5,113.9 L483.2,111.0 L482.9,107.9 L482.5,104.3 L482.0,100.2 L481.5,95.9 L481.0,91.9 L480.6,88.4 L480.3,86.0 L480.0,86.0 L480.2,88.5 L480.4,91.9 L480.7,96.0 L480.9,100.3 L481.2,104.4 L481.4,108.0 L481.6,111.1 L481.7,114.0 L481.9,116.8 L482.0,119.3 L482.2,121.8 L482.4,124.0 L482.8,126.1 L483.3,128.2 L483.8,130.0 L484.3,131.6 L484.7,133.0 L485.0,134.0Z"/><path d="M591.3,148.0 L591.2,146.0 L591.1,143.2 L590.9,139.7 L588.9,136.2 L588.9,133.1 L589.0,130.0 L589.0,127.2 L589.1,124.2 L589.2,121.4 L589.3,118.8 L589.4,116.6 L589.5,115.0 L589.2,115.0 L589.0,116.6 L588.8,118.7 L588.5,121.3 L588.1,124.2 L587.8,127.1 L587.6,130.0 L587.4,133.0 L587.2,136.7 L589.0,140.2 L589.0,143.2 L589.0,146.0 L589.0,148.0Z"/><path d="M588.8,133.5 L587.9,132.2 L586.5,130.4 L585.0,128.2 L583.4,126.0 L582.1,124.2 L581.2,122.9 L581.0,123.0 L581.8,124.3 L583.1,126.3 L584.5,128.5 L585.9,130.7 L587.2,132.7 L588.0,134.0Z"/><path d="M640.9,176.0 L641.5,174.2 L642.3,171.6 L643.2,168.5 L644.2,165.3 L645.3,162.4 L646.5,160.0 L647.8,158.2 L649.0,156.7 L650.3,155.4 L651.8,154.3 L653.6,153.3 L655.9,152.5 L658.5,151.7 L661.5,151.1 L664.8,150.6 L668.3,150.3 L672.1,150.0 L676.0,149.8 L680.3,149.6 L685.1,149.5 L690.1,149.5 L695.1,149.6 L699.8,149.7 L704.0,149.8 L707.7,149.9 L711.0,150.2 L714.1,150.6 L716.9,150.8 L719.7,150.9 L722.5,150.7 L725.1,150.2 L727.5,149.4 L729.9,148.5 L732.2,147.4 L734.6,146.3 L737.3,145.1 L740.3,143.7 L743.7,142.1 L747.2,140.4 L750.5,138.8 L753.6,137.2 L756.0,136.0 L757.8,135.0 L759.1,134.1 L760.1,133.4 L760.9,132.8 L761.5,132.4 L762.0,132.0 L761.0,130.6 L760.4,131.0 L759.8,131.4 L759.1,131.9 L758.1,132.6 L756.8,133.3 L755.1,134.3 L752.7,135.5 L749.7,137.0 L746.3,138.6 L742.8,140.3 L739.5,141.8 L736.4,143.2 L733.7,144.3 L731.3,145.4 L729.0,146.4 L726.8,147.2 L724.6,147.8 L722.2,148.2 L719.7,148.4 L717.1,148.2 L714.3,147.9 L711.3,147.6 L707.9,147.2 L704.1,147.0 L699.9,146.8 L695.1,146.7 L690.1,146.6 L685.1,146.6 L680.2,146.7 L675.9,146.8 L671.9,147.0 L668.1,147.2 L664.4,147.5 L661.0,147.9 L657.8,148.5 L654.8,149.3 L652.3,150.2 L650.1,151.3 L648.1,152.7 L646.4,154.3 L644.9,156.0 L643.4,158.1 L641.9,160.8 L640.6,164.0 L639.4,167.2 L638.4,170.4 L637.5,172.9 L636.9,174.7Z"/><path d="M690.0,149.0 L690.0,146.8 L690.1,143.6 L690.2,139.9 L690.4,136.0 L690.6,132.1 L691.0,128.5 L691.4,125.3 L691.9,122.1 L692.5,118.9 L693.2,115.8 L693.9,112.9 L694.7,110.0 L695.4,107.3 L696.1,104.7 L696.9,102.2 L697.8,99.7 L698.8,97.3 L700.0,95.0 L701.5,92.6 L703.3,90.0 L705.3,87.6 L707.2,85.3 L708.9,83.4 L710.0,82.0 L709.8,81.8 L708.6,83.1 L706.8,85.0 L704.8,87.1 L702.7,89.5 L700.7,92.0 L699.0,94.4 L697.7,96.8 L696.6,99.2 L695.6,101.7 L694.7,104.2 L693.8,106.8 L693.0,109.5 L692.1,112.4 L691.3,115.4 L690.5,118.5 L689.8,121.6 L689.1,124.9 L688.5,128.2 L688.0,131.8 L687.6,135.8 L687.3,139.8 L687.0,143.5 L686.8,146.6 L686.6,148.8Z"/><path d="M694.0,136.0 L695.5,134.3 L697.5,132.0 L700.0,129.2 L702.7,126.3 L705.3,123.4 L707.7,121.0 L709.8,119.0 L711.9,117.3 L714.0,115.7 L716.1,114.0 L718.2,112.2 L720.6,110.0 L723.3,107.2 L726.4,103.8 L729.6,100.3 L732.6,96.9 L735.2,94.0 L737.0,92.0 L736.8,91.8 L734.9,93.8 L732.2,96.6 L729.1,99.8 L725.7,103.2 L722.5,106.4 L719.7,109.1 L717.4,111.2 L715.2,112.9 L713.1,114.5 L711.0,116.1 L708.8,117.8 L706.5,119.8 L704.0,122.2 L701.3,125.0 L698.5,127.8 L696.0,130.5 L693.8,132.8 L692.3,134.4Z"/><path d="M651.1,151.6 L650.8,150.3 L650.4,148.6 L649.9,146.5 L649.4,144.2 L648.9,141.9 L648.4,139.8 L648.0,137.6 L647.5,135.1 L647.0,132.7 L646.6,130.3 L646.2,128.4 L646.0,127.0 L645.7,127.0 L645.8,128.4 L646.0,130.4 L646.2,132.8 L646.5,135.3 L646.7,137.8 L647.0,140.0 L647.3,142.2 L647.7,144.5 L648.1,146.8 L648.5,148.9 L648.8,150.7 L649.0,152.0Z"/><path d="M648.0,142.0 L648.8,140.3 L650.1,137.9 L651.5,135.0 L652.9,132.2 L654.2,129.7 L655.0,128.0 L654.7,127.9 L653.8,129.5 L652.5,131.9 L650.9,134.7 L649.3,137.5 L648.0,139.9 L647.1,141.5Z"/><path d="M733.0,147.0 L734.2,146.2 L735.9,145.1 L737.9,143.8 L740.2,142.3 L742.6,140.7 L745.0,139.0 L747.7,137.0 L750.9,134.5 L754.2,132.0 L757.4,129.5 L760.1,127.5 L762.0,126.0 L761.4,125.2 L759.4,126.6 L756.7,128.6 L753.5,131.0 L750.1,133.5 L746.9,135.9 L744.2,137.8 L741.7,139.5 L739.3,141.0 L737.1,142.5 L735.0,143.7 L733.3,144.7 L732.0,145.5Z"/></g>
</g>
</svg>
<div class="btn" style="left:605px;top:478px;width:156px;height:26px"></div>
<div class="btn" style="left:605px;top:514px;width:156px;height:26px"></div>
<div class="t" style="top:15.20px;font-size:12.6px;line-height:14.477px;left:17.90px;letter-spacing:0.317px;">Hunter:</div><div class="t" style="top:15.20px;font-size:12.6px;line-height:14.477px;left:76.00px;letter-spacing:-0.133px;">Jaimy&nbsp;&nbsp;(GDL) Fun</div><div class="t" style="top:31.10px;font-size:12.6px;line-height:14.477px;left:22.90px;letter-spacing:0.150px;">Trophy Info</div><div class="t" style="top:53.10px;font-size:12.6px;line-height:14.477px;left:18.40px;letter-spacing:0.183px;">Animal:</div><div class="t" style="top:53.10px;font-size:12.6px;line-height:14.477px;left:75.50px;letter-spacing:-0.033px;">MuleDeer buck</div><div class="t" style="top:73.10px;font-size:12.6px;line-height:14.477px;left:17.40px;letter-spacing:0.233px;">Season:</div><div class="t" style="top:73.10px;font-size:12.6px;line-height:14.477px;left:75.50px;letter-spacing:-0.250px;">Rut</div><div class="t" style="top:93.10px;font-size:12.6px;line-height:14.477px;left:17.40px;letter-spacing:0.188px;">Location:</div><div class="t" style="top:93.10px;font-size:12.6px;line-height:14.477px;left:75.50px;letter-spacing:-0.393px;">LAND OF THE RISING SUN (3BB6)</div><div class="t" style="top:112.90px;font-size:12.6px;line-height:14.477px;left:18.40px;letter-spacing:0.250px;">Weapon:</div><div class="t" style="top:112.90px;font-size:12.6px;line-height:14.477px;left:76.50px;letter-spacing:0.047px;">autoloader+scope</div><div class="t" style="top:130.90px;font-size:12.6px;line-height:14.477px;left:18.40px;letter-spacing:0.083px;">Action:</div><div class="t" style="top:130.90px;font-size:12.6px;line-height:14.477px;left:76.30px;letter-spacing:0.080px;">Autoloader Rifle</div><div class="t" style="top:151.10px;font-size:12.6px;line-height:14.477px;left:18.40px;letter-spacing:0.275px;">Ammo:</div><div class="t" style="top:151.10px;font-size:12.6px;line-height:14.477px;left:75.50px;letter-spacing:0.189px;">7mm Magnum</div><div class="t" style="top:169.00px;font-size:12.6px;line-height:14.477px;left:17.40px;letter-spacing:0.220px;">Scope:</div><div class="t" style="top:169.00px;font-size:12.6px;line-height:14.477px;left:76.50px;letter-spacing:0.040px;">4x12 rifle scope</div><div class="t" style="top:188.80px;font-size:12.6px;line-height:14.477px;left:17.40px;letter-spacing:0.250px;">Difficulty:</div><div class="t" style="top:188.80px;font-size:12.6px;line-height:14.477px;left:75.80px;letter-spacing:-0.220px;">Expert</div><div class="t" style="top:208.70px;font-size:12.6px;line-height:14.477px;left:17.40px;letter-spacing:0.025px;">Exotic Equipment:</div><div class="t" style="top:226.50px;font-size:12.6px;line-height:14.477px;left:17.90px;letter-spacing:0.150px;">Date:</div><div class="t" style="top:226.50px;font-size:12.6px;line-height:14.477px;left:76.80px;letter-spacing:0.325px;">03/28/2014 at 12:48:54 pm</div><div class="t" style="top:53.10px;font-size:12.6px;line-height:14.477px;left:189.80px;letter-spacing:0.217px;">Weight:</div><div class="t" style="top:53.10px;font-size:12.6px;line-height:14.477px;left:251.30px;letter-spacing:0.320px;">245 lb</div><div class="t" style="top:73.10px;font-size:12.6px;line-height:14.477px;left:188.80px;letter-spacing:0.062px;">Distance:</div><div class="t" style="top:73.10px;font-size:12.6px;line-height:14.477px;left:248.00px;letter-spacing:0.380px;">296 yd</div><div class="t" style="top:188.80px;font-size:12.6px;line-height:14.477px;left:131.50px;letter-spacing:0.050px;">Ground Objects:</div><div class="t" style="top:188.80px;font-size:12.6px;line-height:14.477px;left:232.40px;letter-spacing:-0.050px;">Low</div><div class="t" style="top:208.70px;font-size:12.6px;line-height:14.477px;left:131.60px;letter-spacing:-1.000px;">No</div><div class="t" style="top:247.20px;font-size:12.6px;line-height:14.477px;left:18.40px;letter-spacing:0.272px;">Antler: 10-points (12) Typical</div><div class="t" style="top:266.80px;font-size:12.6px;line-height:14.477px;left:18.40px;letter-spacing:0.242px;">Tip to tip distance:</div><div class="t" style="top:266.80px;font-size:12.6px;line-height:14.477px;left:152.80px;letter-spacing:0.060px;">42.421</div><div class="t" style="top:286.80px;font-size:12.6px;line-height:14.477px;left:17.40px;letter-spacing:0.163px;">Outside spread size:</div><div class="t" style="top:286.80px;font-size:12.6px;line-height:14.477px;left:152.80px;letter-spacing:0.040px;">41.700</div><div class="t" style="top:306.90px;font-size:12.6px;line-height:14.477px;left:17.40px;letter-spacing:0.183px;">Inside spread size:</div><div class="t" style="top:306.90px;font-size:12.6px;line-height:14.477px;left:151.80px;letter-spacing:0.240px;">39.922</div><div class="t" style="top:326.90px;font-size:12.6px;line-height:14.477px;left:96.70px;letter-spacing:0.100px;">Left</div><div class="t" style="top:326.90px;font-size:12.6px;line-height:14.477px;left:164.60px;letter-spacing:-0.125px;">Right</div><div class="t" style="top:326.90px;font-size:12.6px;line-height:14.477px;left:232.30px;letter-spacing:0.133px;">Diff</div><div class="t" style="top:347.20px;font-size:12.6px;line-height:14.477px;left:22.5px;">F:</div><div class="t" style="top:347.20px;font-size:12.6px;line-height:14.477px;left:103.15px;letter-spacing:0.370px;">30.073</div><div class="t" style="top:347.20px;font-size:12.6px;line-height:14.477px;left:172.15px;letter-spacing:0.370px;">33.702</div><div class="t" style="top:347.20px;font-size:12.6px;line-height:14.477px;left:245.50px;letter-spacing:0.375px;">3.629</div><div class="t" style="top:363.20px;font-size:12.6px;line-height:14.477px;left:22.5px;">G1:</div><div class="t" style="top:363.20px;font-size:12.6px;line-height:14.477px;left:110.45px;letter-spacing:0.388px;">4.757</div><div class="t" style="top:363.20px;font-size:12.6px;line-height:14.477px;left:179.50px;letter-spacing:0.375px;">5.404</div><div class="t" style="top:363.20px;font-size:12.6px;line-height:14.477px;left:245.45px;letter-spacing:0.388px;">0.646</div><div class="t" style="top:379.20px;font-size:12.6px;line-height:14.477px;left:22.5px;">G2:</div><div class="t" style="top:379.20px;font-size:12.6px;line-height:14.477px;left:104.20px;letter-spacing:0.360px;">13.511</div><div class="t" style="top:379.20px;font-size:12.6px;line-height:14.477px;left:172.15px;letter-spacing:0.370px;">13.841</div><div class="t" style="top:379.20px;font-size:12.6px;line-height:14.477px;left:245.45px;letter-spacing:0.388px;">0.329</div><div class="t" style="top:395.20px;font-size:12.6px;line-height:14.477px;left:22.5px;">G3:</div><div class="t" style="top:395.20px;font-size:12.6px;line-height:14.477px;left:103.15px;letter-spacing:0.370px;">10.476</div><div class="t" style="top:395.20px;font-size:12.6px;line-height:14.477px;left:172.15px;letter-spacing:0.370px;">10.299</div><div class="t" style="top:395.20px;font-size:12.6px;line-height:14.477px;left:245.45px;letter-spacing:0.388px;">0.177</div><div class="t" style="top:411.20px;font-size:12.6px;line-height:14.477px;left:22.5px;">G4:</div><div class="t" style="top:411.20px;font-size:12.6px;line-height:14.477px;left:103.15px;letter-spacing:0.370px;">10.402</div><div class="t" style="top:411.20px;font-size:12.6px;line-height:14.477px;left:172.15px;letter-spacing:0.370px;">14.388</div><div class="t" style="top:411.20px;font-size:12.6px;line-height:14.477px;left:245.50px;letter-spacing:0.375px;">3.986</div><div class="t" style="top:427.20px;font-size:12.6px;line-height:14.477px;left:22.5px;">G5:</div><div class="t" style="top:427.20px;font-size:12.6px;line-height:14.477px;left:110.45px;letter-spacing:0.388px;">0.000</div><div class="t" style="top:427.20px;font-size:12.6px;line-height:14.477px;left:179.45px;letter-spacing:0.388px;">0.000</div><div class="t" style="top:427.20px;font-size:12.6px;line-height:14.477px;left:245.45px;letter-spacing:0.388px;">0.000</div><div class="t" style="top:443.20px;font-size:12.6px;line-height:14.477px;left:22.5px;">H1:</div><div class="t" style="top:443.20px;font-size:12.6px;line-height:14.477px;left:110.50px;letter-spacing:0.375px;">5.305</div><div class="t" style="top:443.20px;font-size:12.6px;line-height:14.477px;left:179.50px;letter-spacing:0.375px;">6.031</div><div class="t" style="top:443.20px;font-size:12.6px;line-height:14.477px;left:245.45px;letter-spacing:0.388px;">0.726</div><div class="t" style="top:459.20px;font-size:12.6px;line-height:14.477px;left:22.5px;">H2:</div><div class="t" style="top:459.20px;font-size:12.6px;line-height:14.477px;left:110.50px;letter-spacing:0.375px;">5.773</div><div class="t" style="top:459.20px;font-size:12.6px;line-height:14.477px;left:179.50px;letter-spacing:0.375px;">6.299</div><div class="t" style="top:459.20px;font-size:12.6px;line-height:14.477px;left:245.45px;letter-spacing:0.388px;">0.526</div><div class="t" style="top:475.20px;font-size:12.6px;line-height:14.477px;left:22.5px;">H3:</div><div class="t" style="top:475.20px;font-size:12.6px;line-height:14.477px;left:110.50px;letter-spacing:0.375px;">5.295</div><div class="t" style="top:475.20px;font-size:12.6px;line-height:14.477px;left:179.50px;letter-spacing:0.375px;">5.309</div><div class="t" style="top:475.20px;font-size:12.6px;line-height:14.477px;left:245.45px;letter-spacing:0.388px;">0.014</div><div class="t" style="top:491.20px;font-size:12.6px;line-height:14.477px;left:22.5px;">H4:</div><div class="t" style="top:491.20px;font-size:12.6px;line-height:14.477px;left:110.45px;letter-spacing:0.388px;">4.505</div><div class="t" style="top:491.20px;font-size:12.6px;line-height:14.477px;left:179.45px;letter-spacing:0.388px;">4.894</div><div class="t" style="top:491.20px;font-size:12.6px;line-height:14.477px;left:245.45px;letter-spacing:0.388px;">0.389</div><div class="t" style="top:507.20px;font-size:12.6px;line-height:14.477px;left:22.5px;">Totals:</div><div class="t" style="top:507.20px;font-size:12.6px;line-height:14.477px;left:103.15px;letter-spacing:0.370px;">90.098</div><div class="t" style="top:507.20px;font-size:12.6px;line-height:14.477px;left:164.80px;letter-spacing:0.367px;">100.166</div><div class="t" style="top:507.20px;font-size:12.6px;line-height:14.477px;left:238.15px;letter-spacing:0.370px;">10.422</div><div class="t" style="top:523.20px;font-size:12.6px;line-height:14.477px;left:22.5px;">Abnorm:</div><div class="t" style="top:523.20px;font-size:12.6px;line-height:14.477px;left:110.50px;letter-spacing:0.375px;">3.013</div><div class="t" style="top:523.20px;font-size:12.6px;line-height:14.477px;left:179.50px;letter-spacing:0.375px;">2.964</div><div class="t" style="top:523.20px;font-size:12.6px;line-height:14.477px;left:274.00px;letter-spacing:0.150px;">-</div><div class="t" style="top:477.70px;font-size:12.6px;line-height:14.477px;left:306.90px;letter-spacing:-0.445px;">FINAL SCORE:</div><div class="t" style="top:477.70px;font-size:12.6px;line-height:14.477px;left:397.30px;letter-spacing:0.200px;">213.787</div><div class="t" style="top:477.70px;font-size:12.6px;line-height:14.477px;left:461.80px;letter-spacing:0.091px;">World Record</div><div class="t" style="top:499.10px;font-size:12.6px;line-height:14.477px;left:304.80px;letter-spacing:-0.500px;">Game</div><div class="t" style="top:499.10px;font-size:12.6px;line-height:14.477px;left:397.30px;letter-spacing:0.300px;">1.2</div><div class="t" style="top:485.40px;font-size:12.6px;line-height:14.477px;left:646.40px;letter-spacing:0.130px;">Load Trophy</div><div class="t" style="top:521.40px;font-size:12.6px;line-height:14.477px;left:668.20px;letter-spacing:-0.333px;">EXIT</div>
</body></html>
